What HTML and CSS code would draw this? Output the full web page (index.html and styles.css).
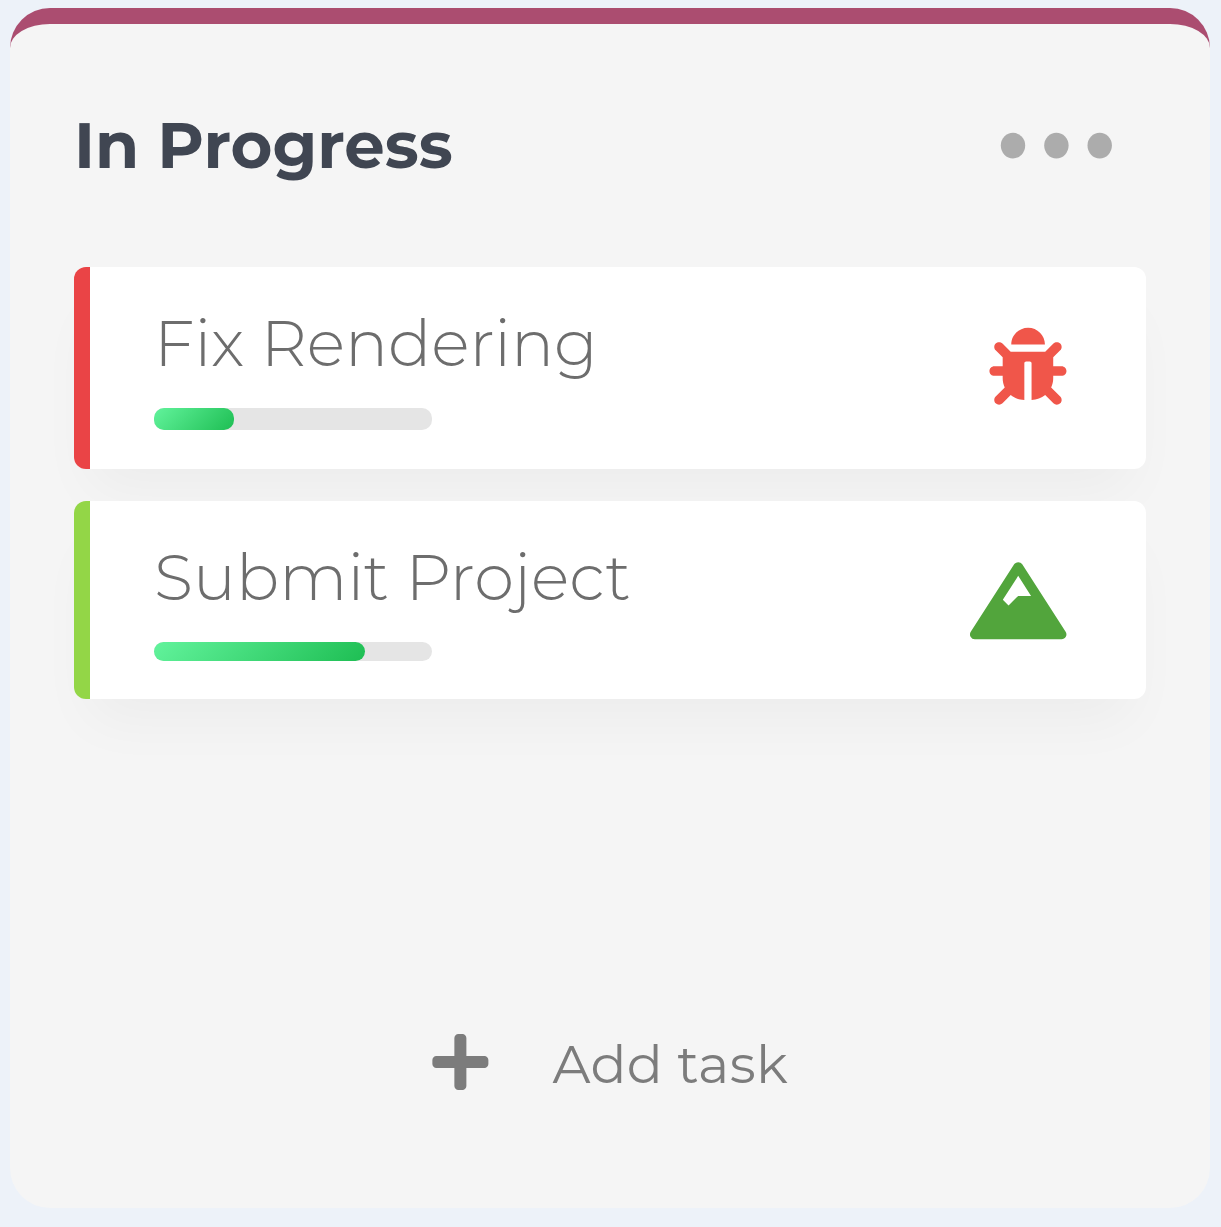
FILE: index.html
```html
<!DOCTYPE html>
<html lang="en">
<head>
<meta charset="utf-8">
<title>In Progress</title>
<link rel="stylesheet" href="styles.css">
</head>
<body>
<section class="column">
  <header class="column-header">
    <h2 class="column-title">In Progress</h2>
    <svg class="dots" viewBox="0 0 112 26"><ellipse cx="13" cy="12.6" rx="12.2" ry="12.8"/><ellipse cx="56.4" cy="12.6" rx="12.2" ry="12.8"/><ellipse cx="99.7" cy="12.6" rx="12.2" ry="12.8"/></svg>
  </header>
  <div class="tasks">
    <article class="task task-red">
      <div class="task-body">
        <h3 class="task-title">Fix Rendering</h3>
        <div class="progress"><div class="progress-fill" style="width: 80px"></div></div>
      </div>
      <svg class="icon-bug" viewBox="-3 2 512 512"><path d="M511.988 288.9c-.478 17.43-15.217 31.1-32.653 31.1H424v16c0 21.864-4.882 42.584-13.6 61.145l60.228 60.228c12.496 12.497 12.496 32.758 0 45.255-12.498 12.497-32.759 12.496-45.256 0l-54.736-54.736C345.886 467.965 314.351 480 280 480V236c0-6.627-5.373-12-12-12h-24c-6.627 0-12 5.373-12 12v244c-34.351 0-65.886-12.035-90.636-32.108l-54.736 54.736c-12.498 12.497-32.759 12.496-45.256 0-12.496-12.497-12.496-32.758 0-45.255l60.228-60.228C92.882 378.584 88 357.864 88 336v-16H32.666C15.23 320 .491 306.33.013 288.9-.484 270.816 14.028 256 32 256h56v-58.745l-46.628-46.628c-12.496-12.497-12.496-32.758 0-45.255 12.498-12.497 32.758-12.497 45.256 0L141.255 160h229.489l54.627-54.627c12.498-12.497 32.758-12.497 45.256 0 12.496 12.497 12.496 32.758 0 45.255L424 197.255V256h56c17.972 0 32.484 14.816 31.988 32.9zM257 0c-61.856 0-112 50.144-112 112h224C369 50.144 318.856 0 257 0z"/></svg>
    </article>
    <article class="task task-green">
      <div class="task-body">
        <h3 class="task-title">Submit Project</h3>
        <div class="progress"><div class="progress-fill" style="width: 211px"></div></div>
      </div>
      <svg class="icon-mountain" viewBox="0 0 640 512"><path d="M634.92 462.7l-288-448C341.03 5.54 330.89 0 320 0s-21.03 5.54-26.92 14.7l-288 448a32.001 32.001 0 0 0-1.17 32.64A32.004 32.004 0 0 0 32 512h576c11.71 0 22.48-6.39 28.09-16.67a31.983 31.983 0 0 0-1.17-32.63zM320 91.18L405.39 224H320l-64 64-38.06-38.06L320 91.18z"/></svg>
    </article>
  </div>
  <div class="add-task">
    <svg class="icon-plus" viewBox="-3 0 448 512"><path d="M416 208H272V64c0-17.67-14.33-32-32-32h-32c-17.67 0-32 14.33-32 32v144H32c-17.67 0-32 14.33-32 32v32c0 17.67 14.33 32 32 32h144v144c0 17.67 14.33 32 32 32h32c17.67 0 32-14.33 32-32V304h144c17.67 0 32-14.33 32-32v-32c0-17.67-14.33-32-32-32z"/></svg>
    <span class="add-label">Add task</span>
  </div>
</section>
</body>
</html>
```
FILE: styles.css
```css
* { box-sizing: border-box; }
body {
  margin: 0;
  padding: 8px 11px 19px 10px;
  background: #edf2f9;
  font-family: Montserrat, Inter, "Liberation Sans", sans-serif;
}
svg { overflow: visible; }
.column {
  display: flex;
  flex-direction: column;
  width: 1200px;
  height: 1200px;
  padding: 81px 64px 114px;
  border-top: 16px solid #ab4d70;
  border-radius: 40px;
  background: #f5f5f5;
}
.column-header {
  display: flex;
  justify-content: space-between;
  align-items: flex-start;
  height: 81px;
  padding-right: 34px;
}
.column-title {
  margin: 0;
  font-size: 64px;
  font-weight: 700;
  line-height: 80px;
  color: #404652;
}
.dots { width: 112px; height: 26px; margin-top: 28px; fill: #acacac; }
.tasks { display: flex; flex-direction: column; gap: 32px; margin-top: 81px; }
.task {
  display: flex;
  justify-content: space-between;
  align-items: flex-start;
  padding: 36px 80px 0 64px;
  border-left: 16px solid;
  border-radius: 12px;
  background: #fff;
  box-shadow: 0 36px 54px -16px rgba(0, 0, 0, 0.04);
}
.task-red { height: 202px; border-left-color: #ea4446; }
.task-green { height: 198px; border-left-color: #93d647; }
.task-title {
  margin: 0 0 25px;
  font-size: 64px;
  font-weight: 300;
  line-height: 80px;
  white-space: nowrap;
  color: #6d6d6d;
}
.task-green .task-title { letter-spacing: 0.1px; }
.progress {
  width: 278.4px;
  height: 22px;
  border-radius: 10px;
  background: #e5e5e5;
}
.task-green .progress { height: 19px; }
.progress-fill {
  height: 100%;
  border-radius: 10px;
  background: linear-gradient(135deg, #62f39c, #1ebe53);
}
.icon-bug { width: 77px; height: 77px; margin-top: 25px; fill: #f0564a; }
.icon-mountain { width: 96.4px; height: 77.4px; margin-top: 24.5px; fill: #52a53c; }
.add-task {
  display: flex;
  align-items: center;
  gap: 64px;
  height: 64px;
  margin-top: auto;
  padding-left: 358.4px;
}
.icon-plus { width: 56px; height: 64px; fill: #7c7c7c; }
.add-label {
  padding-top: 4px;
  font-size: 53px;
  font-weight: 400;
  line-height: 64px;
  letter-spacing: 0.35px;
  white-space: nowrap;
  color: #7c7c7c;
}
```
